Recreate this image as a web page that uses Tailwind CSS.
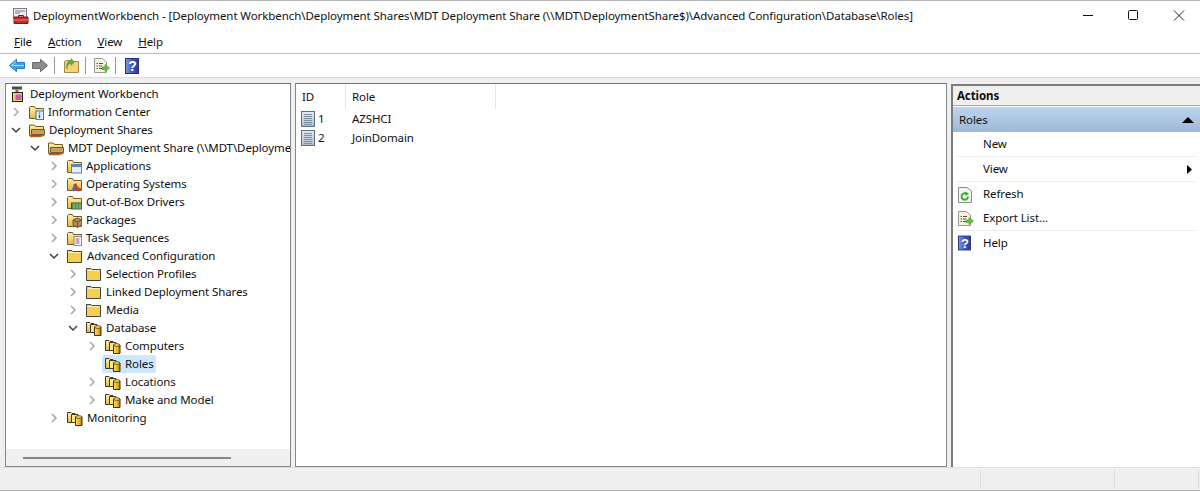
<!DOCTYPE html>
<html lang="en">
<head>
<meta charset="UTF-8">
<title>DeploymentWorkbench</title>
<script src="https://cdn.jsdelivr.net/npm/@tailwindcss/browser@4"></script>
</head>
<body class="bg-[#f0f0f0]">
<svg width="0" height="0" class="absolute">
  <defs>
    <linearGradient id="fy" x1="0" y1="0" x2="0" y2="1"><stop offset="0" stop-color="#fff0a8"/><stop offset="1" stop-color="#e8b83c"/></linearGradient>
    <linearGradient id="cy" x1="0" y1="0" x2="1" y2="0"><stop offset="0" stop-color="#fbe070"/><stop offset=".6" stop-color="#e8b020"/><stop offset="1" stop-color="#a87810"/></linearGradient>
    <linearGradient id="doc" x1="0" y1="0" x2="0" y2="1"><stop offset="0" stop-color="#e6ebf2"/><stop offset="1" stop-color="#aebbcd"/></linearGradient>
    <linearGradient id="hb" x1="0" y1="0" x2="1" y2="0"><stop offset="0" stop-color="#7f97e0"/><stop offset=".5" stop-color="#3f5cc0"/><stop offset="1" stop-color="#2a3f96"/></linearGradient>
    <symbol id="folder" viewBox="0 0 16 16"><path d="M1.500 3.500V14.500H15.500V4.500H7.500L6.500 2.500H2.500Z" fill="url(#fy)" stroke="#6e5c28"/></symbol>
    <symbol id="folder-plain" viewBox="0 0 17 16"><path d="M1.500 2.500V14.500H15.500V3.500H7L6 2.500Z" fill="#f6cf50" stroke="#45453c"/><path d="M2.500 4.500H14.500" stroke="#fff3b8"/></symbol>
    <symbol id="folder-share" viewBox="0 0 17 16"><path d="M1.500 3V13.500H15.500V4.500H7.500L6.500 3Z" fill="url(#fy)" stroke="#6e5c28"/><path d="M3.500 7.500H16.500V12.500H3.500Z" fill="#c7a060" stroke="#6f5a34"/><path d="M2 14.500H12L16.500 13" stroke="#bd5f1c" stroke-width="1.500" fill="none"/></symbol>
    <symbol id="cyl" viewBox="0 0 17 16"><path d="M1.500 2.500V12.500H9V3.500H6L5 2.500Z" fill="url(#fy)" stroke="#3f3a22"/><path d="M5.500 4.500V12.500H12V4.500Z" fill="#ffe68a" stroke="#3f3a22"/><path d="M9.500 7V15.500H16V7Z" fill="url(#cy)" stroke="#3f3010"/><ellipse cx="12.750" cy="7" rx="3.250" ry="1.300" fill="#fbe78c" stroke="#3f3010" stroke-width=".8"/></symbol>
    <symbol id="grid-doc" viewBox="0 0 14 16"><rect x=".5" y=".5" width="13" height="15" fill="url(#doc)" stroke="#5f6f82"/><path d="M3 3.500H11M3 5.500H11M3 7.500H11M3 9.500H11M3 11.500H11M3 13.500H11" stroke="#7f8fa4"/></symbol>
    <symbol id="help" viewBox="0 0 14 16"><rect x=".5" y=".5" width="13" height="15" fill="url(#hb)" stroke="#25347c"/><text x="7.500" y="13" font-family="Liberation Sans, sans-serif" font-weight="700" font-size="14" text-anchor="middle" fill="#fff">?</text></symbol>
    <symbol id="export" viewBox="0 0 17 17"><path d="M1.500 1.500H9.500L13.500 5V15.500H1.500Z" fill="#f7f2dc" stroke="#9a9a8c"/><path d="M3.500 6.500H5M6 6.500H10M3.500 9H5M6 9H9M3.500 11.500H5M6 11.500H9" stroke="#555"/><path d="M9 10H12V7.500L16.500 11L12 14.500V12.500H9Z" fill="#62c23c" stroke="#3d9a28" stroke-width=".6"/></symbol>
    <symbol id="refresh" viewBox="0 0 14 17"><path d="M.5 1.500H9L13.500 5V16.500H.5Z" fill="#f4f6f2" stroke="#8b8b8b"/><path d="M10 10.500A3.200 3.200 0 1 1 8.600 7.800" fill="none" stroke="#3cab37" stroke-width="2"/><path d="M7 5.500L11 7.500L8 10Z" fill="#3cab37"/></symbol>
    <symbol id="chev-r" viewBox="0 0 10 10"><path d="M3 1L7 5L3 9" fill="none" stroke="#a6a6a6" stroke-width="1.500"/></symbol>
    <symbol id="chev-d" viewBox="0 0 10 10"><path d="M1 3L5 7L9 3" fill="none" stroke="#404040" stroke-width="1.500"/></symbol>
  </defs>
</svg>

<div class="w-[1200px] h-[491px] overflow-hidden flex flex-col bg-[#f0f0f0] text-[11.5px] tracking-[-0.1px] text-[#101010] border-t border-b border-[#b4b4b4] font-['Noto_Sans','Open_Sans',sans-serif]">
  <!-- title bar -->
  <div class="h-[30px] shrink-0 bg-white flex items-center pl-[13px]">
    <svg width="16" height="17" viewBox="0 0 16 17" class="shrink-0">
      <rect x=".5" y=".5" width="13" height="9" fill="#eceef2" stroke="#7a7f88"/><path d="M2 3H12M2 5H7" stroke="#7a7f88"/>
      <path d="M1 9H15V15.500H1Z" fill="#c72b2b" stroke="#7e1616"/><path d="M5.500 9V7.500H10.500V9" fill="none" stroke="#7e1616"/><path d="M1 12H15" stroke="#e97f7f"/>
    </svg>
    <span class="ml-[4px] whitespace-nowrap tracking-[-0.08px]">DeploymentWorkbench - [Deployment Workbench\Deployment Shares\MDT Deployment Share (\\MDT\DeploymentShare$)\Advanced Configuration\Database\Roles]</span>
    <div class="ml-auto flex items-center">
      <svg width="46" height="30" viewBox="0 0 46 30"><path d="M21 14.500H31" stroke="#111"/></svg>
      <svg width="46" height="30" viewBox="0 0 46 30"><rect x="20.500" y="9.500" width="9" height="9" rx="1" fill="none" stroke="#111"/></svg>
      <svg width="46" height="30" viewBox="0 0 46 30"><path d="M20 9.500L30 19.500M30 9.500L20 19.500" stroke="#222"/></svg>
    </div>
  </div>
  <!-- menu bar -->
  <div class="h-[23px] shrink-0 bg-white flex items-center pl-[14px] gap-[16px] border-b border-[#b9b9c4]">
    <span><u>F</u>ile</span><span><u>A</u>ction</span><span><u>V</u>iew</span><span><u>H</u>elp</span>
  </div>
  <!-- toolbar -->
  <div class="h-[24px] shrink-0 bg-white flex items-center pl-[9px] border-b border-[#dcdcdc]">
    <svg width="16" height="15" viewBox="0 0 16 14"><path d="M.5 7L7.500 .8V4H15.500V10H7.500V13.200Z" fill="#3f9ff0" stroke="#2478c8"/><path d="M7 3L2.500 7H15" fill="none" stroke="#b6e0ff"/></svg>
    <svg class="ml-[7px]" width="16" height="15" viewBox="0 0 16 14"><path d="M15.500 7L8.500 .8V4H.5V10H8.500V13.200Z" fill="#8d8d8d" stroke="#6a6a6a"/></svg>
    <div class="ml-[6px] w-px h-[17px] bg-[#9a9a9a]"></div>
    <svg class="ml-[9px]" width="15" height="15" viewBox="0 0 15 15"><path d="M.5 3.500V14.500H14.500V3.500H8L7 2.500H2Z" fill="#f3d27c" stroke="#a68a48"/><path d="M3 11C3 7 5 5.500 7 5.500V7.500L10.500 4L7 .5V2.500C3 3 2 7 3 11Z" fill="#5fb33a" stroke="#3b8a22" stroke-width=".5"/></svg>
    <div class="ml-[6px] w-px h-[17px] bg-[#9a9a9a]"></div>
    <svg class="ml-[7px]" width="17" height="17"><use href="#export"/></svg>
    <div class="ml-[5px] w-px h-[17px] bg-[#9a9a9a]"></div>
    <svg class="ml-[9px]" width="14" height="16"><use href="#help"/></svg>
  </div>
  <!-- panes -->
  <div class="flex-1 min-h-0 flex pt-[5px] pl-[5px]">
    <!-- tree -->
    <div class="w-[286px] shrink-0 bg-white border border-[#828790] border-t-[#6e6e6e] flex flex-col overflow-hidden">
      <div id="tree" class="flex-1 min-h-0 pt-[1px] overflow-hidden"></div>
      <div class="h-[17px] shrink-0 bg-[#f0f0f0] flex items-center pl-[17px]">
        <div class="w-[208px] h-[2px] bg-[#858585]"></div>
      </div>
    </div>
    <!-- list -->
    <div class="ml-[4px] w-[652px] shrink-0 bg-white border border-[#828790] border-t-[#6e6e6e] flex flex-col">
      <div class="h-[25px] shrink-0 flex items-center">
        <span class="w-[50px] pl-[6px] h-full flex items-center border-r border-[#e5e5e5]">ID</span>
        <span class="w-[150px] pl-[6px] h-full flex items-center border-r border-[#e5e5e5]">Role</span>
      </div>
      <div class="flex items-center h-[19px]">
        <span class="w-[51px] pl-[5px] flex items-center gap-[3px]"><svg width="14" height="16"><use href="#grid-doc"/></svg>1</span><span class="pl-[5px]">AZSHCI</span>
      </div>
      <div class="flex items-center h-[20px]">
        <span class="w-[51px] pl-[5px] flex items-center gap-[3px]"><svg width="14" height="16"><use href="#grid-doc"/></svg>2</span><span class="pl-[5px]">JoinDomain</span>
      </div>
    </div>
    <!-- actions -->
    <div class="ml-[4px] mt-px flex-1 bg-white border-l-2 border-t-2 border-[#7c7c7c] flex flex-col">
      <div class="h-[20px] shrink-0 pt-px bg-[#f0f0f0] border-b border-[#a8a8a8] pl-[4px] flex items-center font-bold">Actions</div>
      <div class="h-[25px] shrink-0 mt-px bg-gradient-to-b from-[#bdd5ee] to-[#9db8d6] pl-[6px] pr-[6px] flex items-center justify-between">
        <span>Roles</span>
        <svg width="12" height="6" viewBox="0 0 12 6"><path d="M6 0L12 6H0Z" fill="#000"/></svg>
      </div>
      <div class="px-[4px]">
        <div class="h-[25px] pl-[26px] flex items-center border-b border-[#ececec]">New</div>
        <div class="h-[25px] pl-[26px] pr-[4px] flex items-center justify-between border-b border-[#ececec]">View<svg width="5" height="9" viewBox="0 0 5 9"><path d="M0 0L5 4.500L0 9Z" fill="#000"/></svg></div>
        <div class="h-[24px] flex items-center"><svg class="ml-[1px] mr-[11px]" width="14" height="17"><use href="#refresh"/></svg>Refresh</div>
        <div class="h-[25px] flex items-center border-b border-[#ececec]"><svg class="mr-[9px]" width="17" height="17"><use href="#export"/></svg>Export List...</div>
        <div class="h-[24px] flex items-center"><svg class="ml-[1px] mr-[12px]" width="13" height="16"><use href="#help"/></svg>Help</div>
      </div>
    </div>
  </div>
  <!-- status bar -->
  <div class="h-[23px] shrink-0 bg-[#f0f0f0] border-t border-[#dedede] flex">
    <div class="w-[981px] border-r border-[#dcdcdc] my-[2px]"></div>
    <div class="w-[134px] border-r border-[#dcdcdc] my-[2px]"></div>
    <div class="w-[84px] border-r border-[#dcdcdc] my-[2px]"></div>
  </div>
</div>

<script>
// depth, expander (r/d/none), icon, label, selected
const rows = [
  [0, '', 'root', 'Deployment Workbench'],
  [1, 'r', 'info', 'Information Center'],
  [1, 'd', 'folder-share', 'Deployment Shares'],
  [2, 'd', 'folder-share', 'MDT Deployment Share (\\\\MDT\\DeploymentShare$)'],
  [3, 'r', 'apps', 'Applications'],
  [3, 'r', 'os', 'Operating Systems'],
  [3, 'r', 'drv', 'Out-of-Box Drivers'],
  [3, 'r', 'pkg', 'Packages'],
  [3, 'r', 'ts', 'Task Sequences'],
  [3, 'd', 'folder-plain', 'Advanced Configuration'],
  [4, 'r', 'folder-plain', 'Selection Profiles'],
  [4, 'r', 'folder-plain', 'Linked Deployment Shares'],
  [4, 'r', 'folder-plain', 'Media'],
  [4, 'd', 'cyl', 'Database'],
  [5, 'r', 'cyl', 'Computers'],
  [5, '', 'cyl', 'Roles', true],
  [5, 'r', 'cyl', 'Locations'],
  [5, 'r', 'cyl', 'Make and Model'],
  [3, 'r', 'cyl', 'Monitoring'],
];

// small badges drawn over the plain folder
const badges = {
  info: '<rect x="8" y="7" width="7.500" height="8.500" fill="#e6eefb" stroke="#4f6fb0"/><path d="M11.500 8.500V9.500M11.500 10.500V14" stroke="#2d52a8" stroke-width="1.300"/>',
  apps: '<rect x="5.500" y="6.500" width="10" height="8.500" fill="#e8eefa" stroke="#6b7fa6"/><path d="M6 8H15" stroke="#5a86cc" stroke-width="2"/>',
  os: '<path d="M7 9L10 7L12 11L15.500 13L13 15.500L9 14Z" fill="#c8402c"/><path d="M6 12L9 10L10 14L7 15.500Z" fill="#3a6ec0"/>',
  drv: '<rect x="5.500" y="9" width="10.500" height="6" fill="#4f8f4a" stroke="#2c5a2c"/><path d="M8 9V15M11 9V15M14 9V15" stroke="#8fc48a"/>',
  pkg: '<path d="M7 8L11.500 6L16 8V13L11.500 15.500L7 13Z" fill="#b08d5c" stroke="#6d5530"/><path d="M7 8L11.500 10L16 8M11.500 10V15" stroke="#6d5530" fill="none"/>',
  ts: '<rect x="8" y="6.500" width="7.500" height="9" fill="#fbfbfb" stroke="#8a8a8a"/><path d="M9.500 9H13.500M9.500 11H13.500" stroke="#c84a3a"/><path d="M9.500 13H13.500" stroke="#4a6fc0"/>',
};

function iconSvg(name) {
  if (name === 'root') {
    return '<svg width="16" height="16" viewBox="0 0 16 16"><path d="M1 .5H11V3.500H1Z" fill="#4a4a4a"/><path d="M4.500 3.500H7.500V7H4.500Z" fill="#8a7436"/><rect x="1.500" y="6.500" width="10" height="9" fill="#f0cf70" stroke="#222"/><rect x="4.500" y="8.500" width="6" height="5.500" fill="#c860a8"/></svg>';
  }
  if (badges[name]) {
    return '<svg width="16" height="16" viewBox="0 0 16 16"><use href="#folder"/>' + badges[name] + '</svg>';
  }
  return '<svg width="17" height="16"><use href="#' + name + '"/></svg>';
}

const tree = document.getElementById('tree');
rows.forEach(([depth, exp, icon, label, selected]) => {
  const row = document.createElement('div');
  row.className = 'h-[18px] flex items-center whitespace-nowrap';
  // 19px of indent per level; the expander sits just in front of the icon
  row.style.paddingLeft = (depth === 0 ? 3 : depth * 19 - 14) + 'px';
  const chev = depth === 0 ? '' : exp ? '<svg width="10" height="10" class="shrink-0"><use href="#chev-' + exp + '"/></svg>' : '<span class="w-[10px] shrink-0"></span>';
  row.innerHTML = chev +
    '<span class="' + (depth === 0 ? '' : 'ml-[5px] ') + 'h-[18px] flex items-center pl-[2px] pr-[2px] rounded-[2px] ' + (selected ? 'bg-[#cce8ff]' : '') + '">' +
    iconSvg(icon) + '<span class="' + (depth === 0 ? 'ml-[3px]' : 'ml-[4px]') + '">' + label + '</span></span>';
  tree.appendChild(row);
});
</script>
</body>
</html>
